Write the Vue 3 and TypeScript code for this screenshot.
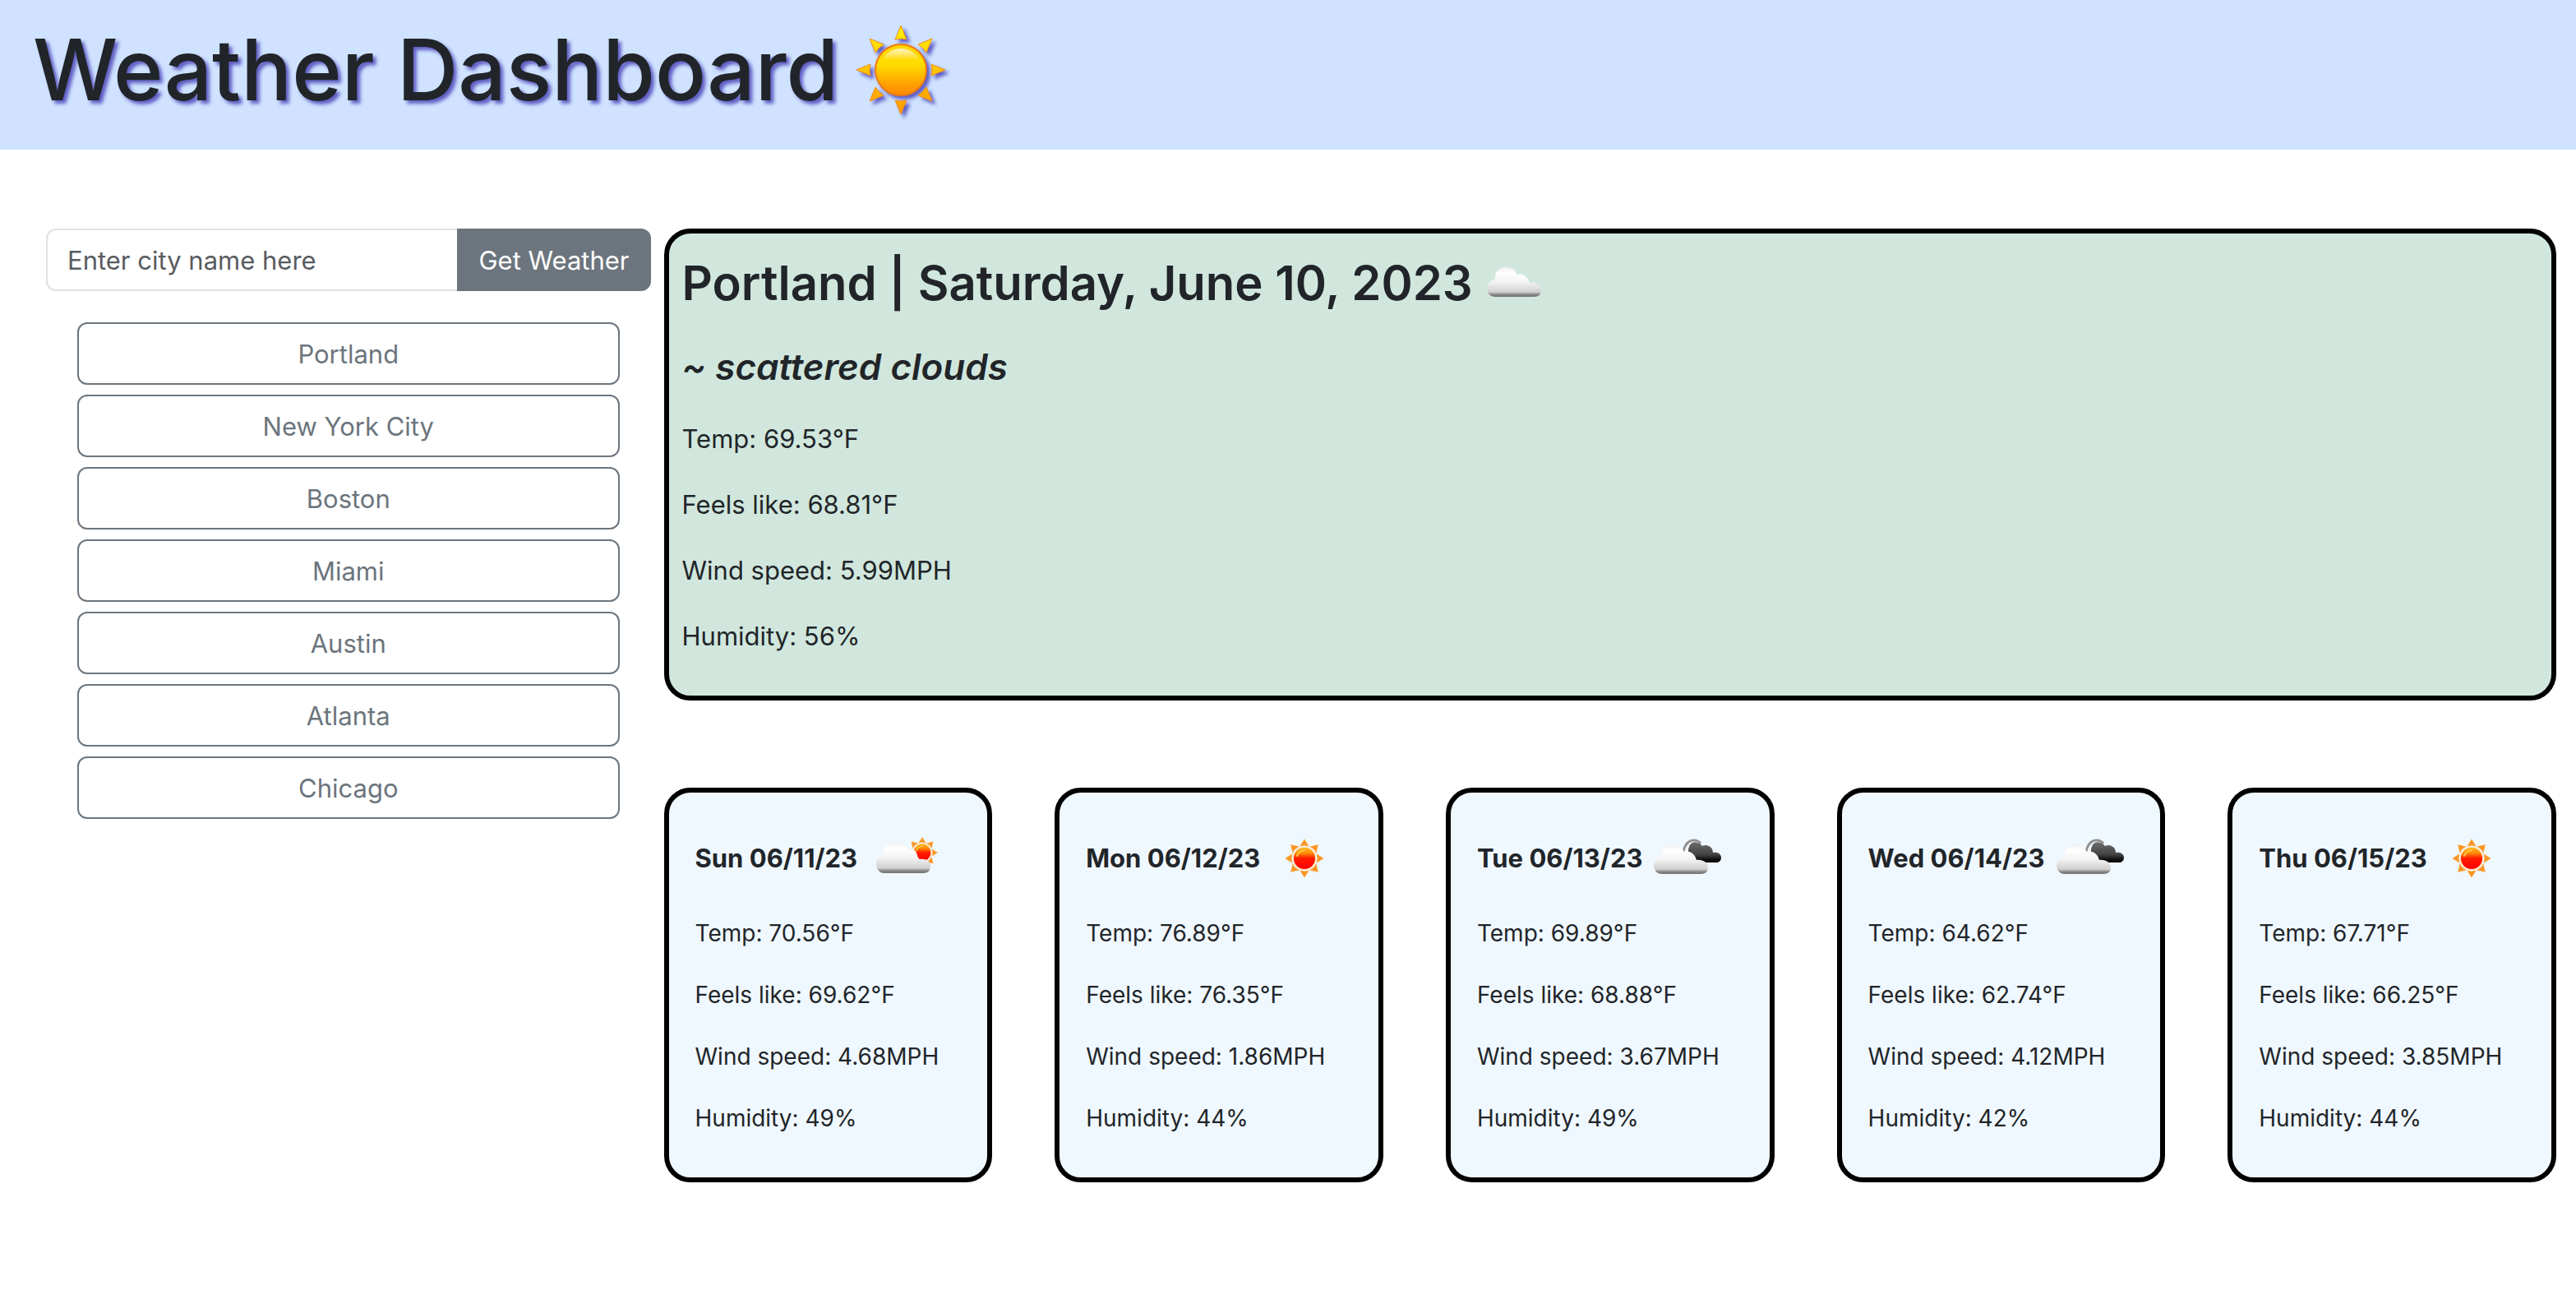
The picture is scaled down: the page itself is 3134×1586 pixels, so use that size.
<script setup lang="ts">
import { ref } from 'vue'

type Sky = 'sun' | 'few' | 'broken'

interface Reading {
  temp: string
  feels: string
  wind: string
  humidity: string
}

interface Day extends Reading {
  label: string
  sky: Sky
}

const city = ref('')
const cities: string[] = ['Portland', 'New York City', 'Boston', 'Miami', 'Austin', 'Atlanta', 'Chicago']

const today: Reading = { temp: '69.53', feels: '68.81', wind: '5.99', humidity: '56' }

const days: Day[] = [
  { label: 'Sun 06/11/23', sky: 'few', temp: '70.56', feels: '69.62', wind: '4.68', humidity: '49' },
  { label: 'Mon 06/12/23', sky: 'sun', temp: '76.89', feels: '76.35', wind: '1.86', humidity: '44' },
  { label: 'Tue 06/13/23', sky: 'broken', temp: '69.89', feels: '68.88', wind: '3.67', humidity: '49' },
  { label: 'Wed 06/14/23', sky: 'broken', temp: '64.62', feels: '62.74', wind: '4.12', humidity: '42' },
  { label: 'Thu 06/15/23', sky: 'sun', temp: '67.71', feels: '66.25', wind: '3.85', humidity: '44' },
]

const rays: number[] = [0, 45, 90, 135, 180, 225, 270, 315]
</script>

<template>
  <svg class="defs" aria-hidden="true">
    <defs>
      <linearGradient id="disc" x1="0" y1="0" x2="0" y2="1">
        <stop offset="0" stop-color="#ffd500" />
        <stop offset="0.4" stop-color="#ffdc00" />
        <stop offset="0.8" stop-color="#ff9d00" />
        <stop offset="1" stop-color="#ff8a00" />
      </linearGradient>
      <linearGradient id="gloss" x1="0" y1="0" x2="0" y2="1">
        <stop offset="0" stop-color="#fff" stop-opacity="0.75" />
        <stop offset="1" stop-color="#fff" stop-opacity="0.05" />
      </linearGradient>
      <linearGradient id="rayfill" gradientUnits="userSpaceOnUse" x1="0" y1="-54" x2="0" y2="54">
        <stop offset="0" stop-color="#fff200" />
        <stop offset="0.5" stop-color="#ffc400" />
        <stop offset="1" stop-color="#ff9a00" />
      </linearGradient>
      <linearGradient id="hot" x1="0" y1="0" x2="0" y2="1">
        <stop offset="0" stop-color="#ffb31a" />
        <stop offset="0.25" stop-color="#ff8c0a" />
        <stop offset="0.5" stop-color="#ff1a00" />
        <stop offset="1" stop-color="#ff0000" />
      </linearGradient>
      <linearGradient id="puff" x1="0" y1="0" x2="0" y2="1">
        <stop offset="0" stop-color="#f0f0f0" />
        <stop offset="0.2" stop-color="#ffffff" />
        <stop offset="0.5" stop-color="#f4f4f4" />
        <stop offset="0.84" stop-color="#d0d0d0" />
        <stop offset="0.92" stop-color="#888888" />
        <stop offset="1" stop-color="#707070" />
      </linearGradient>
      <linearGradient id="storm" x1="0" y1="0" x2="0" y2="1">
        <stop offset="0" stop-color="#6b6b6b" />
        <stop offset="0.6" stop-color="#444" />
        <stop offset="0.85" stop-color="#111" />
        <stop offset="1" stop-color="#000" />
      </linearGradient>
      <filter id="soft" x="-10%" y="-10%" width="120%" height="120%">
        <feGaussianBlur stdDeviation="0.7" />
      </filter>
      <path
        id="cloud"
        d="M10 36 C4 36 0 31 0 26 C0 20 4 16 10 15 C9 6 15 0 23 0 C30 0 34 3 37 9 C43 7 50 11 52 19 C59 18 66 22 66 28 C66 33 63 36 57 36 Z"
      />
      <g id="hotsun">
        <g fill="#fa9320" stroke="#fba94a" stroke-width="1">
          <path v-for="a in rays" :key="a" d="M-5 -15 Q0 -17 5 -15 L0 -23 Z" :transform="`rotate(${a})`" />
        </g>
        <circle r="14" fill="#ffe0a0" />
        <circle r="13" fill="url(#hot)" />
        <path d="M-9 -3 Q-7 -9 0 -10" fill="none" stroke="#ffc83c" stroke-width="2" stroke-linecap="round" />
      </g>
    </defs>
  </svg>

  <header class="banner">
    <h1>Weather Dashboard</h1>
    <svg class="emblem" viewBox="-56 -56 112 112" role="img" aria-label="Sun">
      <g fill="url(#rayfill)" stroke="#f08a1c" stroke-width="1">
        <path d="M-7 -37 Q0 -39 7 -37 L0 -54 Z" />
        <path d="M7 37 Q0 39 -7 37 L0 54 Z" />
        <path d="M-37 -7 Q-39 0 -37 7 L-54 0 Z" />
        <path d="M37 -7 Q39 0 37 7 L54 0 Z" />
        <path d="M-31 -21 Q-27 -27 -21 -31 L-38 -38 Z" />
        <path d="M31 -21 Q27 -27 21 -31 L38 -38 Z" />
        <path d="M-31 21 Q-27 27 -21 31 L-38 38 Z" />
        <path d="M31 21 Q27 27 21 31 L38 38 Z" />
      </g>
      <circle r="31" fill="url(#disc)" stroke="#f07a10" stroke-width="2" />
      <path d="M-23 -12 A26 26 0 0 1 23 -12 Q0 -14 -23 -12 Z" fill="url(#gloss)" />
    </svg>
  </header>

  <main class="layout">
    <aside>
      <form class="search" @submit.prevent>
        <input v-model="city" type="text" aria-label="City name" placeholder="Enter city name here" />
        <button type="submit">Get Weather</button>
      </form>
      <div class="cities">
        <button v-for="c in cities" :key="c" type="button">{{ c }}</button>
      </div>
    </aside>

    <div class="results">
      <section class="today">
        <h2>
          <span>Portland | Saturday, June 10, 2023</span>
          <svg class="now" viewBox="0 10 100 80" role="img" aria-label="Scattered clouds">
            <use href="#cloud" x="17" y="31" fill="url(#puff)" filter="url(#soft)" />
          </svg>
        </h2>
        <h3>~ scattered clouds</h3>
        <p>Temp: {{ today.temp }}°F</p>
        <p>Feels like: {{ today.feels }}°F</p>
        <p>Wind speed: {{ today.wind }}MPH</p>
        <p>Humidity: {{ today.humidity }}%</p>
      </section>

      <section class="forecast">
        <article v-for="d in days" :key="d.label" class="day">
          <h4>
            <span>{{ d.label }}</span>
            <svg class="sky" viewBox="0 0 100 100" aria-hidden="true">
              <g v-if="d.sky === 'sun'" transform="translate(50 50)">
                <use href="#hotsun" />
              </g>
              <template v-else-if="d.sky === 'few'">
                <use href="#hotsun" transform="translate(75 43) scale(0.8)" />
                <g transform="translate(19 30)">
                  <path
                    d="M10 38 C4 38 0 33 0 27 C0 21 4 16 9 15 C9 6 15 0 23 0 C30 0 36 4 38 10 C42 8 47 9 49 13 C50 17 51 20 53 21 C60 20 66 23 66 29 C66 35 63 38 57 38 Z"
                    fill="url(#puff)"
                    filter="url(#soft)"
                  />
                </g>
              </template>
              <template v-else>
                <g filter="url(#soft)">
                  <path d="M46 42 Q49 28 59 28 Q64 28 67 32" fill="none" stroke="#909090" stroke-width="3" />
                  <path
                    d="M52 55 L52 40 C53 31 59 29 63 31 C67 32 68 34 69 35 C75 32 82 36 82 43 C88 42 92 45 92 49 C92 53 89 55 86 55 Z"
                    fill="url(#storm)"
                  />
                  <path d="M48 40 Q51 31 58 30" fill="none" stroke="#e6e6e6" stroke-width="1" />
                </g>
                <use href="#cloud" x="10" y="33" fill="url(#puff)" filter="url(#soft)" />
              </template>
            </svg>
          </h4>
          <p>Temp: {{ d.temp }}°F</p>
          <p>Feels like: {{ d.feels }}°F</p>
          <p>Wind speed: {{ d.wind }}MPH</p>
          <p>Humidity: {{ d.humidity }}%</p>
        </article>
      </section>
    </div>
  </main>
</template>

<style>
body {
  margin: 0;
  background: #fff;
  color: #212529;
  font-family: Inter, 'Liberation Sans', sans-serif;
  font-size: 31px;
  line-height: 48px;
}
</style>

<style scoped>
*,
*::before,
*::after {
  box-sizing: border-box;
}

h1,
h2,
h3,
h4,
p {
  margin: 0;
}

button,
input {
  font: inherit;
}

.defs {
  position: absolute;
  width: 0;
  height: 0;
}

.banner {
  display: flex;
  align-items: center;
  gap: 20px;
  height: 182px;
  padding: 0 40px 12px;
  background: #cfe2ff;
}

h1 {
  font-size: 103px;
  font-weight: 500;
  line-height: 132px;
  text-shadow: 4px 4px 4px #5f5ec4;
}

.emblem {
  width: 112px;
  height: 112px;
  filter: drop-shadow(4px 4px 2px #5f5ec4);
}

.layout {
  display: grid;
  grid-template-columns: 23fr 72fr;
  gap: 16px;
  padding: 96px 24px 0 56px;
}

.search {
  display: flex;
  height: 76px;
}

.search input {
  flex: 1;
  min-width: 0;
  padding: 2px 24px 0;
  border: 2px solid #dee2e6;
  border-right: 0;
  border-radius: 12px 0 0 12px;
  background: #fff;
  color: #212529;
}

.search input::placeholder {
  color: #595c5f;
  opacity: 1;
}

.search button {
  padding: 2px 26px 0;
  border: 0;
  border-radius: 0 12px 12px 0;
  background: #6c757d;
  color: #fff;
}

.cities {
  display: flex;
  flex-direction: column;
  gap: 12px;
  margin-top: 38px;
  padding: 0 38px;
}

.cities button {
  height: 76px;
  padding: 2px 24px 0;
  border: 2px solid #6c757d;
  border-radius: 12px;
  background: transparent;
  color: #6c757d;
}

.today {
  padding: 18px 16px 16px;
  border: 6px solid #000;
  border-radius: 32px;
  background: #d1e7dd;
}

h2 {
  display: flex;
  align-items: center;
  margin-bottom: 16px;
  font-size: 58px;
  font-weight: 600;
  line-height: 84px;
}

.now {
  width: 100px;
  height: 80px;
}

h3 {
  margin-bottom: 20px;
  font-size: 44px;
  font-style: italic;
  font-weight: 600;
  line-height: 88px;
}

.today p {
  margin-bottom: 32px;
}

.forecast {
  display: grid;
  grid-template-columns: repeat(5, 1fr);
  gap: 76px;
  margin-top: 106px;
}

.day {
  padding: 20px 0 18px 32px;
  border: 6px solid #000;
  border-radius: 32px;
  background: #f0f8ff;
}

h4 {
  display: flex;
  align-items: center;
  gap: 4px;
  height: 120px;
  margin-bottom: 10px;
  font-size: 31px;
  font-weight: 700;
}

.sky {
  flex: none;
  width: 100px;
  height: 100px;
}

.day p {
  margin-bottom: 32px;
  font-size: 28px;
  line-height: 43px;
}
</style>
